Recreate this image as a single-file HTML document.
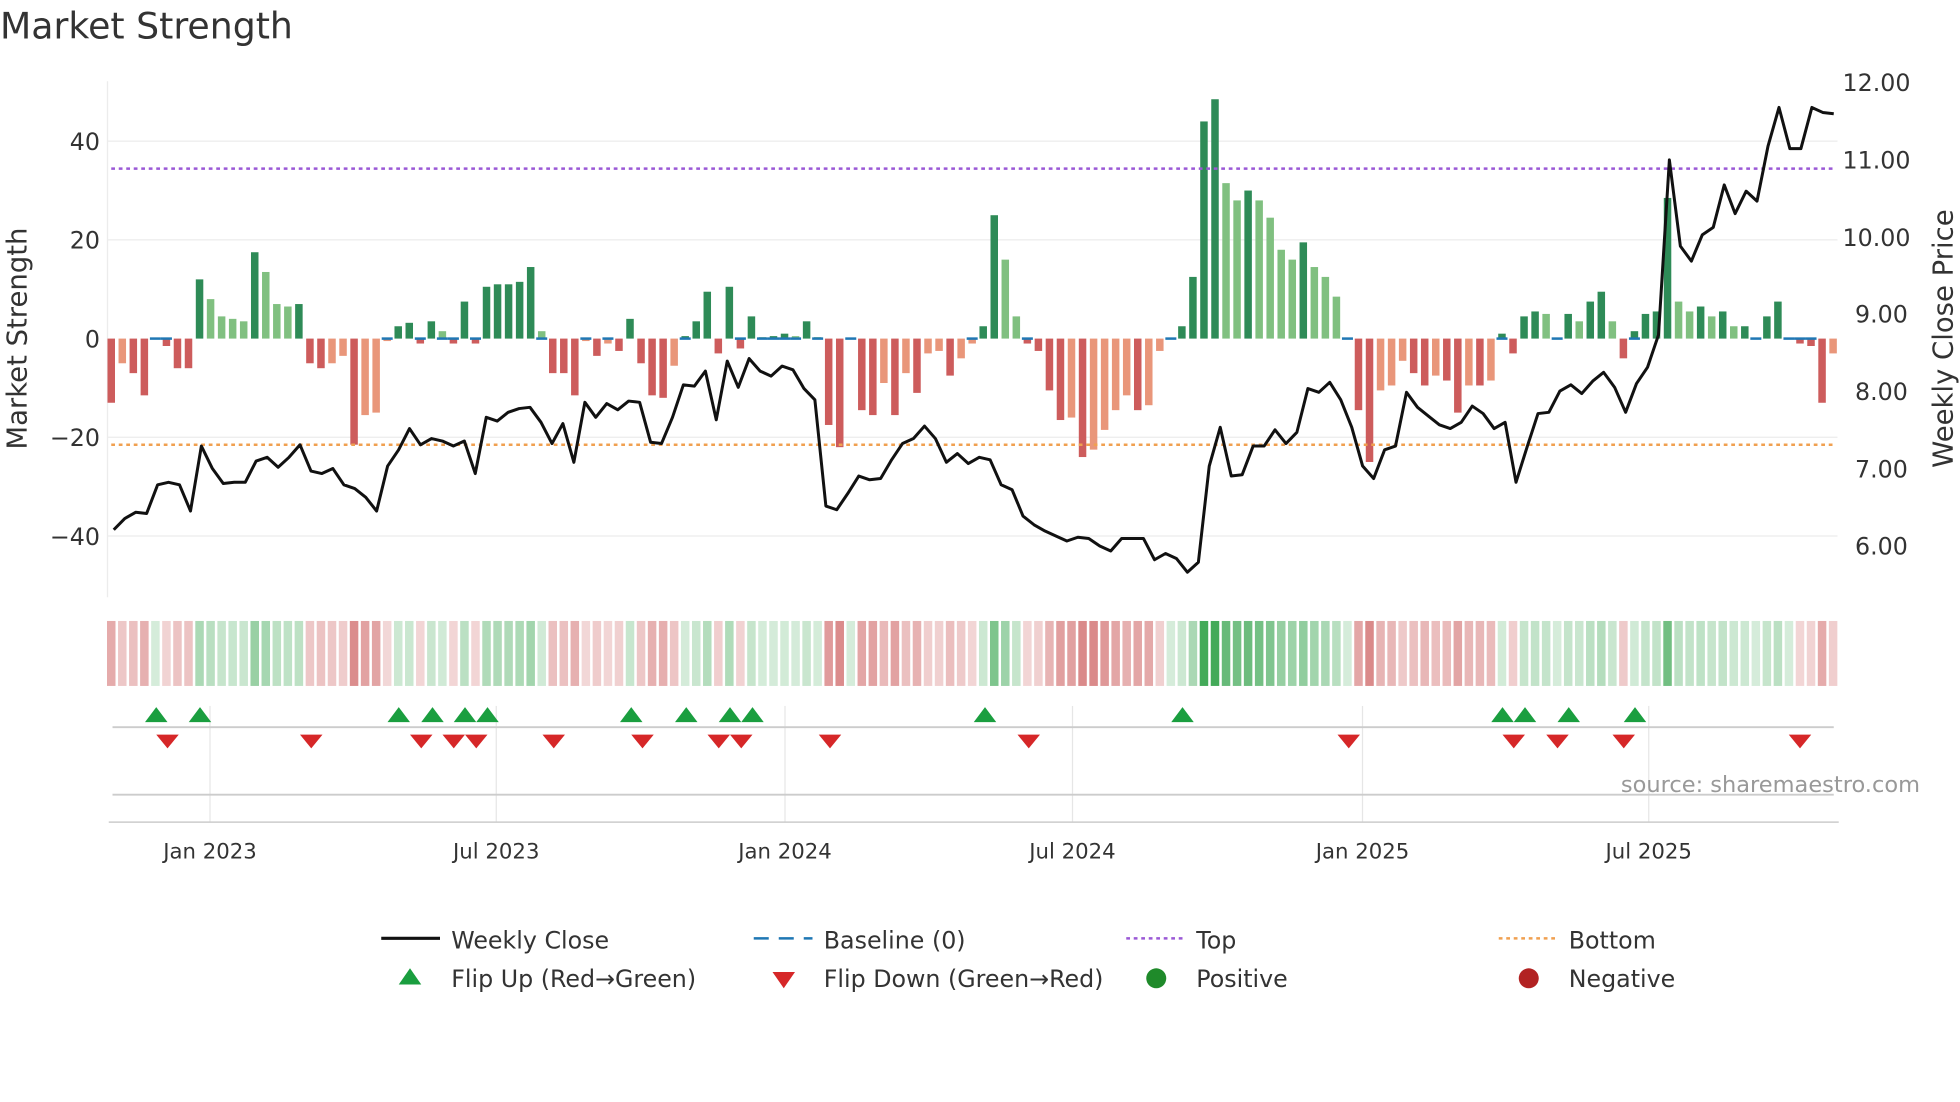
<!DOCTYPE html>
<html><head><meta charset="utf-8"><style>
html,body{margin:0;padding:0;background:#fff;width:1960px;height:1102px;overflow:hidden}
svg{display:block}
text{font-family:"DejaVu Sans","Liberation Sans",sans-serif;fill:#333}
</style></head><body>
<svg id="s" width="1960" height="1102" viewBox="0 0 1568 882" preserveAspectRatio="none" xmlns="http://www.w3.org/2000/svg">
<rect width="1568" height="882" fill="#fff"/>
<text x="0" y="31" font-size="29" fill="#333">Market Strength</text>
<g stroke="#ececec" stroke-width="1">
<line x1="86" y1="113" x2="1470" y2="113"/><line x1="86" y1="192" x2="1470" y2="192"/>
<line x1="86" y1="350" x2="1470" y2="350"/><line x1="86" y1="429" x2="1470" y2="429"/>
<line x1="86" y1="65" x2="86" y2="478"/>
</g>
<g font-size="19" text-anchor="end">
<text x="80" y="120">40</text><text x="80" y="199">20</text><text x="80" y="278">0</text>
<text x="80" y="357">−20</text><text x="80" y="436">−40</text>
</g>
<g font-size="19">
<text x="1474" y="73">12.00</text><text x="1474" y="135">11.00</text><text x="1474" y="197">10.00</text>
<text x="1484" y="258">9.00</text><text x="1484" y="320">8.00</text><text x="1484" y="382">7.00</text><text x="1484" y="444">6.00</text>
</g>
<text transform="translate(21,271) rotate(-90)" font-size="22" text-anchor="middle">Market Strength</text>
<text transform="translate(1562,271) rotate(-90)" font-size="22" text-anchor="middle">Weekly Close Price</text>
<g id="bars"></g>
<line x1="89" y1="135" x2="1468" y2="135" stroke="#9b59d6" stroke-width="2" stroke-dasharray="3,3"/>
<line x1="89" y1="356" x2="1468" y2="356" stroke="#f0a050" stroke-width="2" stroke-dasharray="3,3"/>
<polyline id="price" fill="none" stroke="#111" stroke-width="2.4" stroke-linejoin="round"/>
<g id="heat"></g>
<g stroke="#e6e6e6"><line x1="168" y1="565" x2="168" y2="658"/><line x1="397" y1="565" x2="397" y2="658"/><line x1="628" y1="565" x2="628" y2="658"/><line x1="858" y1="565" x2="858" y2="658"/><line x1="1090" y1="565" x2="1090" y2="658"/><line x1="1319" y1="565" x2="1319" y2="658"/></g>
<line x1="90" y1="582" x2="1467" y2="582" stroke="#ccc" stroke-width="1.5"/>
<line x1="90" y1="636" x2="1467" y2="636" stroke="#ccc" stroke-width="1.5"/>
<line x1="87" y1="658" x2="1471" y2="658" stroke="#ccc" stroke-width="1.2"/>
<g id="flips"></g>
<text x="1536" y="634" font-size="18" text-anchor="end" style="fill:#999">source: sharemaestro.com</text>
<g font-size="17" text-anchor="middle">
<text x="168" y="687">Jan 2023</text><text x="397" y="687">Jul 2023</text><text x="628" y="687">Jan 2024</text>
<text x="858" y="687">Jul 2024</text><text x="1090" y="687">Jan 2025</text><text x="1319" y="687">Jul 2025</text>
</g>
<g font-size="19">
<line x1="305" y1="751" x2="352" y2="751" stroke="#111" stroke-width="2.5"/><text x="361" y="759">Weekly Close</text>
<line x1="603" y1="751" x2="650" y2="751" stroke="#1f77b4" stroke-width="2" stroke-dasharray="12,8"/><text x="659" y="759">Baseline (0)</text>
<line x1="901" y1="751" x2="948" y2="751" stroke="#9b59d6" stroke-width="2" stroke-dasharray="3,3"/><text x="957" y="759">Top</text>
<line x1="1199" y1="751" x2="1246" y2="751" stroke="#f0a050" stroke-width="2" stroke-dasharray="3,3"/><text x="1255" y="759">Bottom</text>
<polygon points="319,788 328,775 337,788" fill="#1a9e3f"/><text x="361" y="790">Flip Up (Red→Green)</text>
<polygon points="618,778 627,791 636,778" fill="#d62728"/><text x="659" y="790">Flip Down (Green→Red)</text>
<circle cx="925" cy="783" r="8" fill="#1f8a2a"/><text x="957" y="790">Positive</text>
<circle cx="1223" cy="783" r="8" fill="#b22222"/><text x="1255" y="790">Negative</text>
</g>
</svg>
<script>
var v=[-13,-5,-7,-11.5,0,-1.5,-6,-6,12,8,4.5,4,3.5,17.5,13.5,7,6.5,7,-5,-6,-5,-3.5,-21.5,-15.5,-15,-0.5,2.5,3.2,-1,3.5,1.5,-1,7.5,-1,10.5,11,11,11.5,14.5,1.5,-7,-7,-11.5,-0.5,-3.5,-1,-2.5,4,-5,-11.5,-12,-5.5,0.5,3.5,9.5,-3,10.5,-2,4.5,0.3,0.5,1,0.5,3.5,0.3,-17.5,-22,0,-14.5,-15.5,-9,-15.5,-7,-11,-3,-2.5,-7.5,-4,-1,2.5,25,16,4.5,-1,-2.5,-10.5,-16.5,-16,-24,-22.5,-18.5,-14.5,-11.5,-14.5,-13.5,-2.5,0,2.5,12.5,44,48.5,31.5,28,30,28,24.5,18,16,19.5,14.5,12.5,8.5,0,-14.5,-25,-10.5,-9.5,-4.5,-7,-9.5,-7.5,-8.5,-15,-9.5,-9.5,-8.5,1,-3,4.5,5.5,5,0,5,3.5,7.5,9.5,3.5,-4,1.5,5,5.5,28.5,7.5,5.5,6.5,4.5,5.5,2.5,2.5,0,4.5,7.5,0,-1,-1.5,-13,-3];
var p=[424,415,410,411,388,386,388,409,357,375,387,386,386,369,366,374,366,356,377,379,375,388,391,398,409,373,360,343,356,351,353,357,353,379,334,337,330,327,326,338,355,339,370,322,334,323,328,321,322,354,355,334,308,309,297,336,289,310,287,297,301,293,296,311,320,405,408,395,381,384,383,368,355,351,341,351,370,363,371,366,368,388,392,413,420,425,429,433,430,431,437,441,431,431,431,448,443,447,458,450,373,342,381,380,357,357,344,355,346,311,314,306,320,342,373,383,360,357,314,326,333,340,343,338,325,331,343,338,386,358,331,330,313,308,315,305,298,310,330,307,294,268,128,197,209,188,182,148,171,153,161,117,86,119,119,86,90,91];
var NS="http://www.w3.org/2000/svg";
function el(t,a,par){var e=document.createElementNS(NS,t);for(var k in a)e.setAttribute(k,a[k]);document.getElementById(par).appendChild(e);return e;}
var dx=8.83,x0=89,y0=271,k=3.95;
for(var i=0;i<v.length;i++){
 var x=x0+dx*i,val=v[i],prev=i?v[i-1]:0,c;
 if(val>0)c=(val>=prev)?"#2e8b57":"#80c080";
 else if(val<0)c=(val<=prev)?"#cd5c5c":"#e9967a";
 if(val!==0){var h=Math.abs(val)*k;el("rect",{x:x-3,y:val>0?y0-h:y0,width:6,height:h,fill:c},"bars");}
 if(Math.abs(val)<2.5) el("rect",{x:x-4.4,y:y0-1,width:8.8,height:2,fill:"#1f77b4"},"bars");
 var hc=val>=0?"rgba(46,160,70,"+(0.2+Math.min(0.7,val/60))+")":"rgba(200,80,80,"+(0.22+Math.min(0.45,-val/50))+")";
 el("rect",{x:x-3.4,y:497,width:6.8,height:52,fill:hc},"heat");
}
var n=p.length,sp=(1467-91)/(n-1),pts=[];for(var i=0;i<n;i++){pts.push((91+sp*i).toFixed(1)+","+p[i]);}
document.getElementById("price").setAttribute("points",pts.join(" "));
[125,160,319,346,372,390,505,549,584,602,788,946,1202,1220,1255,1308].forEach(function(x){el("polygon",{points:(x-9)+",578 "+x+",566 "+(x+9)+",578",fill:"#1a9e3f"},"flips");});
[134,249,337,363,381,443,514,575,593,664,823,1079,1211,1246,1299,1440].forEach(function(x){el("polygon",{points:(x-9)+",588 "+x+",599 "+(x+9)+",588",fill:"#d62728"},"flips");});
</script>
</body></html>
